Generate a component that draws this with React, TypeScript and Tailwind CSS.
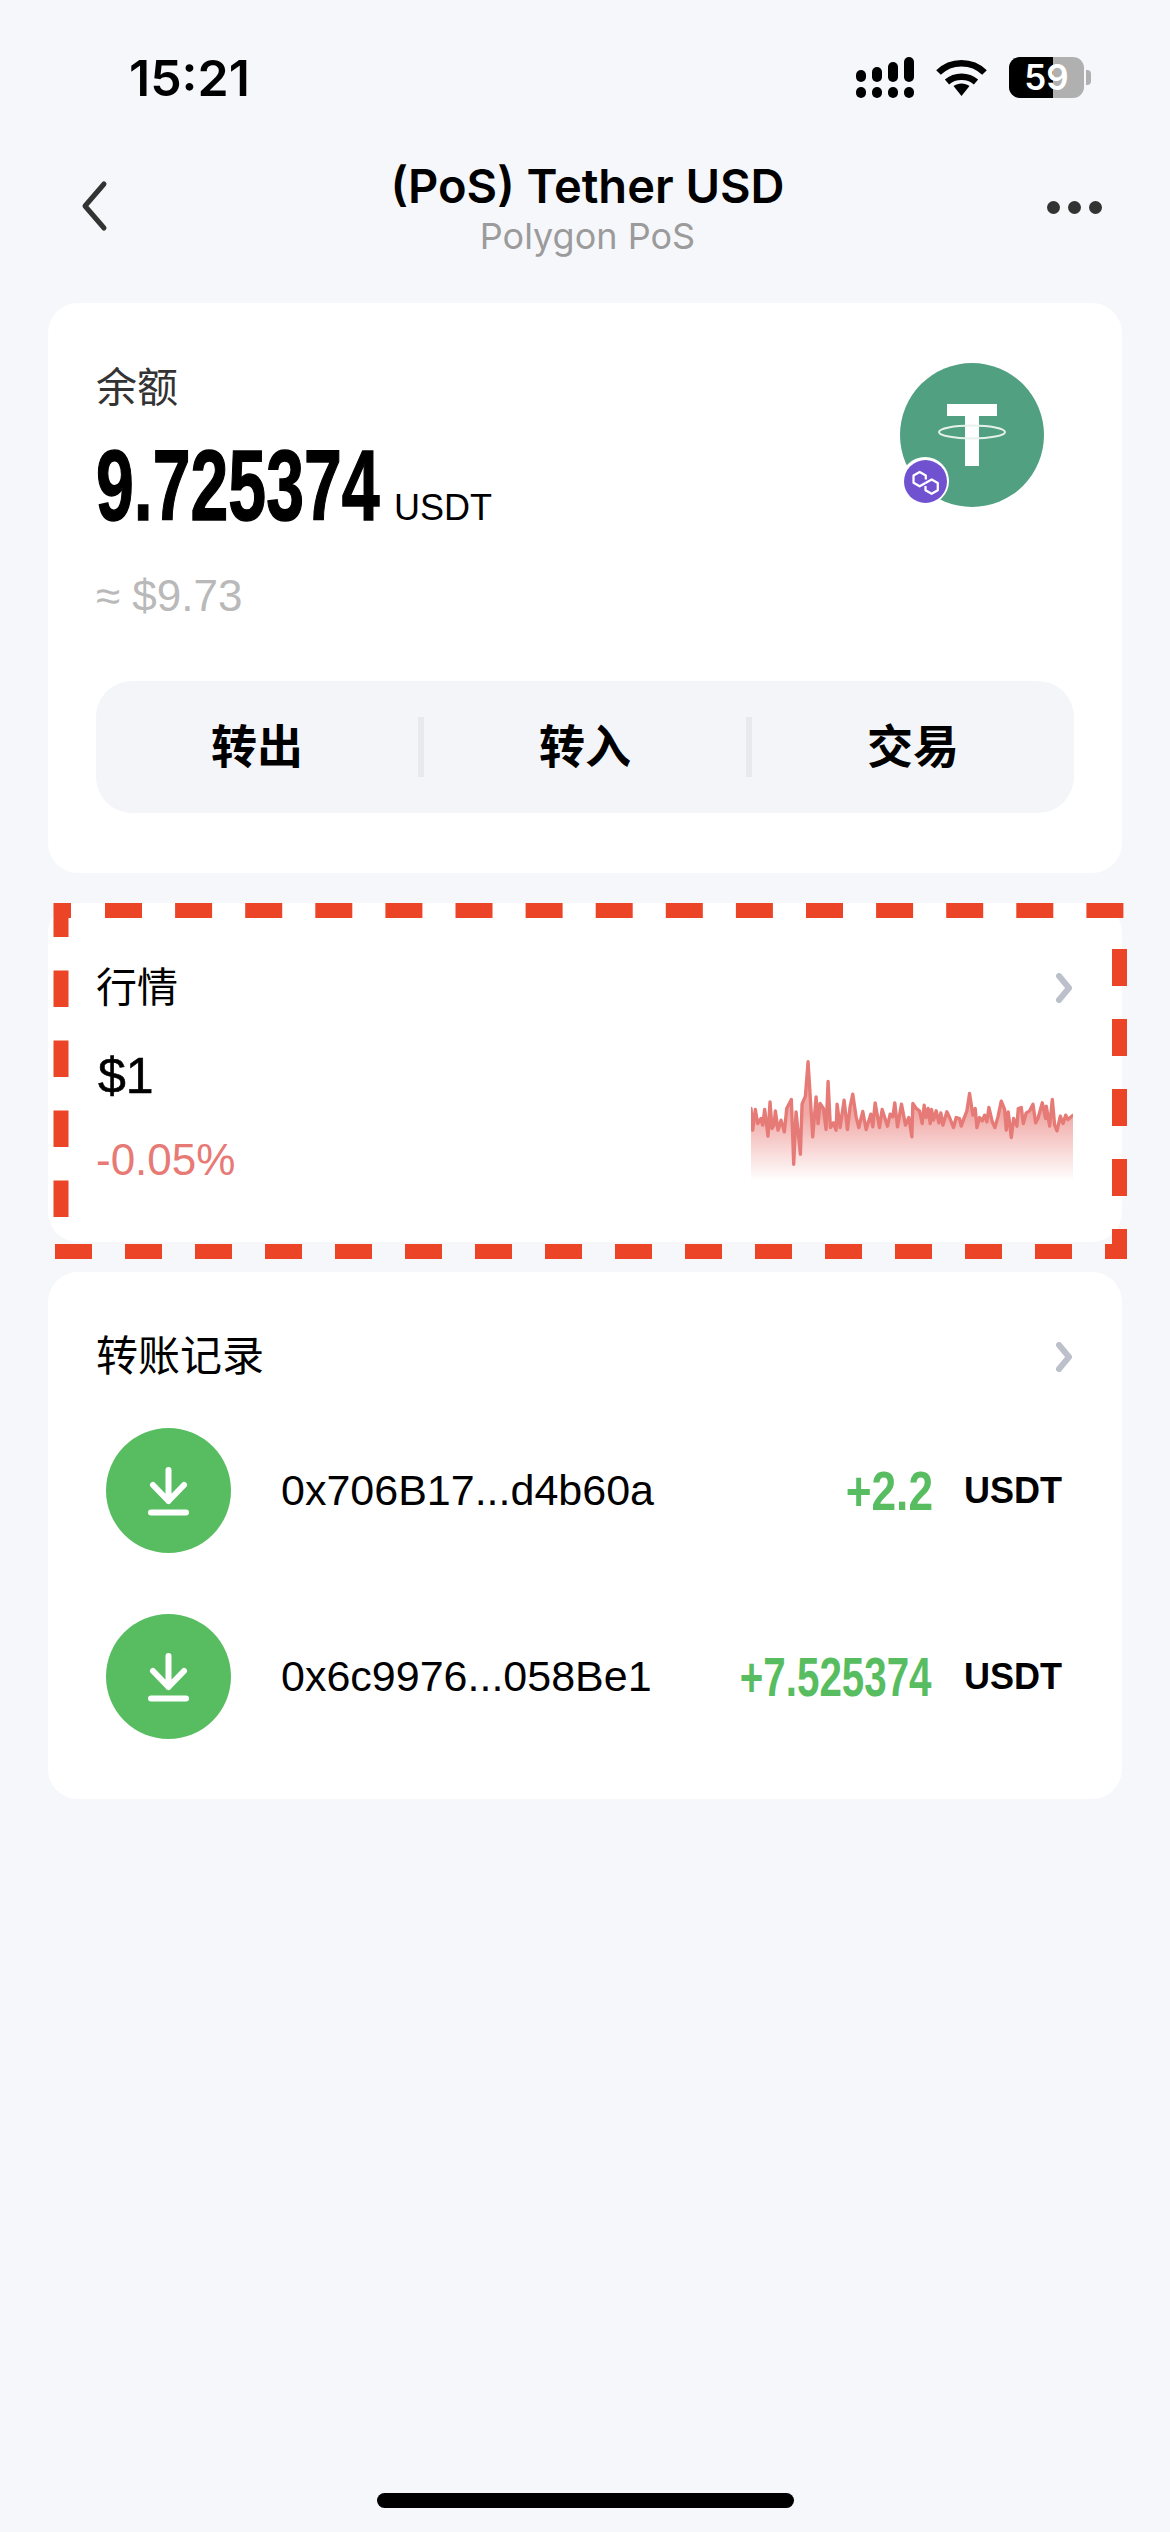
import React from 'react';

// chart points read off the reference, in zoomed px
const CHART_PTS: [number, number][] = [
  [65,205],[70,270],[78,208],[85,250],[95,235],[100,255],[106,208],[116,288],[122,185],[128,265],[134,255],[138,212],[146,270],[155,240],[165,275],[172,205],[186,178],[193,372],[200,215],[213,342],[218,192],[228,168],[236,65],[250,290],[260,170],[266,250],[272,190],[282,205],[290,268],[296,124],[303,262],[312,248],[320,270],[323,192],[332,262],[344,180],[354,268],[362,200],[370,162],[380,230],[388,262],[400,214],[410,268],[424,222],[430,260],[437,188],[450,262],[458,208],[474,258],[482,222],[490,230],[496,188],[504,260],[516,192],[528,255],[538,232],[547,290],[550,190],[560,205],[570,212],[578,250],[584,195],[590,232],[596,205],[602,250],[606,208],[612,240],[620,212],[628,248],[634,218],[640,255],[652,215],[660,232],[672,262],[680,232],[690,235],[695,258],[705,230],[712,212],[720,160],[730,225],[737,205],[742,262],[750,232],[758,242],[765,225],[772,245],[778,202],[788,245],[796,262],[805,230],[815,183],[825,208],[830,270],[836,215],[845,292],[852,235],[862,258],[866,205],[875,202],[881,250],[890,218],[900,212],[910,192],[918,248],[925,235],[938,188],[948,235],[950,198],[960,258],[968,178],[975,255],[982,272],[992,228],[1000,250],[1008,225],[1015,238],[1030,225],
];

const linePath = CHART_PTS.map(([x, y], i) => `${i === 0 ? 'M' : 'L'}${x} ${y}`).join(' ');

const StatusBar = () => (
  <div className="flex h-[130px] items-start pl-[129px] pt-[50px]">
    <span className="font-['Inter'] text-[50px] leading-[56px] font-semibold text-black">15:21</span>
    <div className="ml-auto flex items-start pt-[7px] pr-[79px]">
      {/* signal */}
      <svg width="58" height="41" viewBox="0 0 58 41" fill="black">
        <rect x="0" y="13" width="10" height="12" rx="5" />
        <rect x="16" y="10" width="10" height="15" rx="5" />
        <rect x="32" y="5" width="10" height="20" rx="5" />
        <rect x="48" y="0" width="10" height="25" rx="5" />
        <rect x="0" y="30" width="10" height="11" rx="5" />
        <rect x="16" y="30" width="10" height="11" rx="5" />
        <rect x="32" y="30" width="10" height="11" rx="5" />
        <rect x="48" y="30" width="10" height="11" rx="5" />
      </svg>
      {/* wifi */}
      <svg className="ml-[22px] mt-[2px]" width="51" height="37" viewBox="0 0 51 37" fill="none" stroke="black" strokeWidth="6.5">
        <path d="M2.5 13.5 C15 1 36 1 48.5 13.5" />
        <path d="M11 23 C19 16 32 16 40 23" />
        <path d="M17.5 27 C22 23.5 29 23.5 33.5 27 L25.5 37 Z" fill="black" stroke="none" />
      </svg>
      {/* battery */}
      <div className="relative ml-[22px] h-[41px] w-[75px] overflow-hidden rounded-[11px] bg-[#b0b0b0]">
        <div className="h-full w-[44px] bg-black" />
        <span className="absolute inset-0 flex items-center justify-center font-['Inter'] text-[35px] font-semibold text-white">59</span>
      </div>
      <div className="ml-[2px] mt-[13px] h-[15px] w-[5px] rounded-r-[4px] bg-[#b0b0b0]" />
    </div>
  </div>
);

const NavBar = () => (
  <div className="flex h-[173px] items-start">
    <svg className="ml-[80px] mt-[50px]" width="30" height="52" viewBox="0 0 30 52" fill="none" stroke="#333333" strokeWidth="5" strokeLinecap="round" strokeLinejoin="round">
      <path d="M24 4 L5 26 L24 48" />
    </svg>
    <div className="flex flex-1 flex-col items-center pl-[18px]">
      <span className="mt-[29px] font-['Inter'] text-[47px] leading-[54px] font-semibold whitespace-nowrap text-black">(PoS) Tether USD</span>
      <span className="mt-[2px] font-['Inter'] text-[36px] leading-[42px] text-[#9b9b9b]">Polygon PoS</span>
    </div>
    <div className="mr-[68px] mt-[71px] flex gap-[8px]">
      <div className="h-[13px] w-[13px] rounded-full bg-[#333333]" />
      <div className="h-[13px] w-[13px] rounded-full bg-[#333333]" />
      <div className="h-[13px] w-[13px] rounded-full bg-[#333333]" />
    </div>
  </div>
);

const Chevron = () => (
  <svg width="16" height="30" viewBox="0 0 16 30" fill="none" stroke="#bcc0ca" strokeWidth="6" strokeLinecap="round" strokeLinejoin="round">
    <path d="M3 3 L13 15 L3 27" />
  </svg>
);

const TokenLogo = () => (
  <div className="relative mr-[78px] h-[144px] w-[144px]">
    <svg width="144" height="144" viewBox="0 0 144 144">
      <circle cx="72" cy="72" r="72" fill="#50a081" />
      <rect x="47" y="41" width="50" height="12" fill="white" />
      <rect x="65" y="41" width="14" height="62" fill="white" />
      <ellipse cx="72" cy="69" rx="33" ry="6.5" fill="none" stroke="#e6f1ec" strokeWidth="2" />
    </svg>
    <div className="absolute left-[1px] top-[94px] flex h-[48px] w-[48px] items-center justify-center rounded-full bg-white">
      <svg width="43" height="43" viewBox="0 0 42 42" fill="none" stroke="white" strokeWidth="2.2" strokeLinejoin="round">
        <circle cx="21" cy="21" r="21" fill="#7052d0" stroke="none" />
        <path d="M21.3 19 V15.2 L15.3 11.7 L9.3 15.2 V22.2 L15.3 25.7 L21 22.5" />
        <path d="M21 25.5 V29.5 L27 33 L33 29.5 V22.5 L27 19 L21 22.5" />
      </svg>
    </div>
  </div>
);

const ActionPanel = () => (
  <div className="mx-[48px] mt-[61px] flex h-[132px] items-center rounded-[36px] bg-[#f4f5f9] text-[46px] font-bold text-black">
    <div className="flex-1 text-center">转出</div>
    <div className="h-[60px] w-[6px] bg-[#e8e9ed]" />
    <div className="flex-1 text-center">转入</div>
    <div className="h-[60px] w-[6px] bg-[#e8e9ed]" />
    <div className="flex-1 text-center">交易</div>
  </div>
);

const BalanceCard = () => (
  <div className="h-[570px] rounded-[30px] bg-white pt-[60px]">
    <div className="flex items-start justify-between">
      <div className="pl-[48px]">
        <div className="mt-[2px] text-[41px] leading-[46px] text-[#333333]">余额</div>
        <div className="mt-[29px] flex items-baseline">
          <span className="inline-block w-[282px] origin-left scale-x-[0.68] text-[100px] leading-[90px] font-bold whitespace-nowrap text-black [-webkit-text-stroke:1.5px_black]">9.725374</span>
          <span className="ml-[16px] text-[36px] text-black">USDT</span>
        </div>
        <div className="mt-[37px] text-[44px] leading-[48px] text-[#b9b9b9]">≈ $9.73</div>
      </div>
      <TokenLogo />
    </div>
    <ActionPanel />
  </div>
);

const MarketCard = () => (
  <div className="h-[339px] rounded-[30px] bg-white pt-[60px]">
    <div className="flex items-center justify-between pl-[48px] pr-[50px]">
      <span className="text-[41px] leading-[50px] text-black">行情</span>
      <Chevron />
    </div>
    <div className="flex items-start justify-between pr-[49px]">
      <div className="pl-[50px]">
        <div className="mt-[33px] text-[50px] leading-[60px] text-black [-webkit-text-stroke:0.6px_black]">$1</div>
        <div className="ml-[-2px] mt-[29px] text-[44px] leading-[50px] text-[#e87a76]">-0.05%</div>
      </div>
      <svg className="mt-[47px]" width="322" height="122" viewBox="65 60 965 365" fill="none">
        <defs>
          <linearGradient id="chartFill" gradientUnits="userSpaceOnUse" x1="0" y1="220" x2="0" y2="422">
            <stop offset="0" stopColor="#e87a76" stopOpacity="0.65" />
            <stop offset="1" stopColor="#e87a76" stopOpacity="0" />
          </linearGradient>
        </defs>
        <path d={`${linePath} L1030 422 L65 422 Z`} fill="url(#chartFill)" />
        <path d={linePath} stroke="#e67a76" strokeWidth="10" strokeLinejoin="round" strokeLinecap="round" />
      </svg>
    </div>
  </div>
);

const DownloadIcon = () => (
  <svg width="125" height="125" viewBox="0 0 125 125" fill="none" stroke="white" strokeWidth="6" strokeLinecap="round" strokeLinejoin="round">
    <circle cx="62.5" cy="62.5" r="62.5" fill="#57bd60" stroke="none" />
    <path d="M62.5 42 V73 M47 57 L62.5 73 L78 57" />
    <path d="M45 84.5 H80" />
  </svg>
);

type TransferRowProps = {
  address: string;
  amount: string;
  amountClass: string;
};

const TransferRow = ({ address, amount, amountClass }: TransferRowProps) => (
  <div className="flex items-center pl-[58px] pr-[60px]">
    <DownloadIcon />
    <span className="ml-[50px] text-[43px] text-black">{address}</span>
    <span className={`ml-auto w-[260px] origin-right text-right text-[56px] font-bold whitespace-nowrap text-[#57bd60] ${amountClass}`}>{amount}</span>
    <span className="ml-[37px] text-[36px] font-bold text-black">USDT</span>
  </div>
);

const TransferCard = () => (
  <div className="h-[527px] rounded-[30px] bg-white pt-[60px]">
    <div className="flex items-center justify-between pl-[48px] pr-[50px]">
      <span className="text-[42px] leading-[50px] text-black">转账记录</span>
      <Chevron />
    </div>
    <div className="mt-[46px] flex flex-col gap-[61px]">
      <TransferRow address="0x706B17...d4b60a" amount="+2.2" amountClass="scale-x-[0.79] translate-x-[6px]" />
      <TransferRow address="0x6c9976...058Be1" amount="+7.525374" amountClass="scale-x-[0.72]" />
    </div>
  </div>
);

export default function App() {
  return (
    <div className="relative flex h-[2532px] w-[1170px] flex-col overflow-hidden bg-[#f6f7fb] font-['Liberation_Sans','Noto_Sans_CJK_SC',sans-serif]">
      <StatusBar />
      <NavBar />
      <div className="flex flex-col gap-[30px] px-[48px]">
        <BalanceCard />
        <MarketCard />
        <TransferCard />
      </div>
      <div className="mt-auto mb-[24px] h-[15px] w-[417px] self-center rounded-full bg-black" />

      {/* red dashed annotation drawn over the market card */}
      <svg className="pointer-events-none absolute left-0 top-0" width="1170" height="2532" fill="none" stroke="#ec4427" strokeWidth="15">
        <path d="M105 910.5 H1124" strokeDasharray="37 33.1" />
        <path d="M1119.5 949 V1251.5 H54" strokeDasharray="37 33" />
        <path d="M61 1217 V910.5 H71" strokeDasharray="36.5 33.5" />
      </svg>
    </div>
  );
}
